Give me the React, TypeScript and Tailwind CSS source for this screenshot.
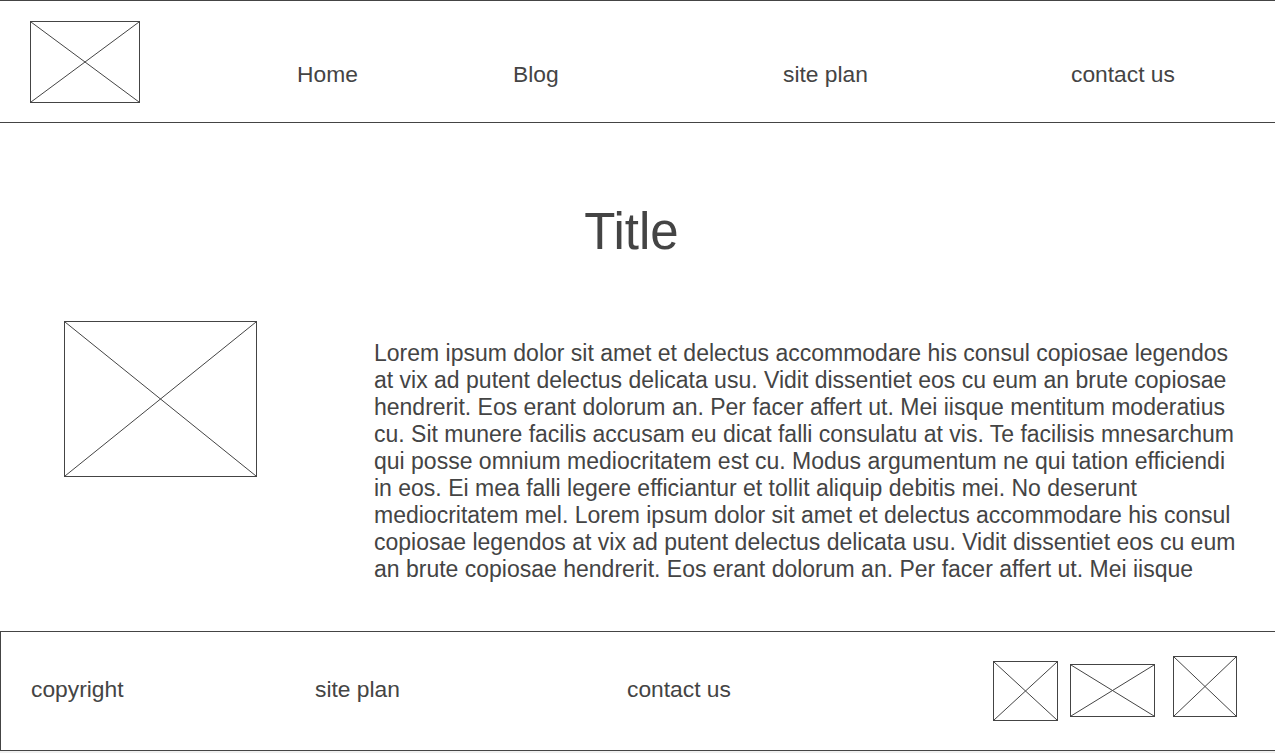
import React from "react";

function Placeholder({ className }: { className: string }) {
  return (
    <div className={`border border-[#444] box-border ${className}`}>
      <svg width="100%" height="100%" viewBox="0 0 100 100" preserveAspectRatio="none" className="block">
        <line x1="0" y1="0" x2="100" y2="100" stroke="#444" strokeWidth="1" vectorEffect="non-scaling-stroke" />
        <line x1="100" y1="0" x2="0" y2="100" stroke="#444" strokeWidth="1" vectorEffect="non-scaling-stroke" />
      </svg>
    </div>
  );
}

const body =
  "Lorem ipsum dolor sit amet et delectus accommodare his consul copiosae legendos at vix ad putent delectus delicata usu. Vidit dissentiet eos cu eum an brute copiosae hendrerit. Eos erant dolorum an. Per facer affert ut. Mei iisque mentitum moderatius cu. Sit munere facilis accusam eu dicat falli consulatu at vis. Te facilisis mnesarchum qui posse omnium mediocritatem est cu. Modus argumentum ne qui tation efficiendi in eos. Ei mea falli legere efficiantur et tollit aliquip debitis mei. No deserunt mediocritatem mel. Lorem ipsum dolor sit amet et delectus accommodare his consul copiosae legendos at vix ad putent delectus delicata usu. Vidit dissentiet eos cu eum an brute copiosae hendrerit. Eos erant dolorum an. Per facer affert ut. Mei iisque";

export default function App() {
  return (
    <div
      className="w-full h-[753px] bg-[#f0f0f0] text-[#444] overflow-hidden flex flex-col"
      style={{ fontFamily: '"Liberation Sans", Arial, sans-serif' }}
    >
      <div className="bg-white h-[751px] flex flex-col">
        {/* Header */}
        <header className="h-[123px] shrink-0 border-t border-b border-[#444] flex items-start">
          <Placeholder className="ml-[30px] mt-[20px] w-[110px] h-[82px] shrink-0" />
          <nav className="flex items-start mt-[60px] ml-[157px] text-[22.8px] leading-[26px]">
            <div className="w-[216px]">Home</div>
            <div className="w-[270px]">Blog</div>
            <div className="w-[288px]">site plan</div>
            <div>contact us</div>
          </nav>
        </header>

        {/* Main */}
        <main className="h-[508px] shrink-0 flex flex-col">
          <h1 className="mt-[83px] text-center pr-[12px] text-[51px] leading-none font-normal">Title</h1>
          <div className="mt-[64px] flex items-start">
            <Placeholder className="ml-[64px] w-[193px] h-[156px] shrink-0" />
            <p className="ml-[117px] mt-[19px] w-[868px] text-[23px] leading-[27px]">{body}</p>
          </div>
        </main>

        {/* Footer */}
        <footer className="h-[120px] shrink-0 border-t border-b border-l border-[#444] flex items-center text-[22.8px] leading-[26px]">
          <div className="ml-[30px] w-[284px] mb-[4px]">copyright</div>
          <div className="w-[312px] mb-[4px]">site plan</div>
          <div className="w-[366px] mb-[4px]">contact us</div>
          <div className="flex items-start self-start">
            <Placeholder className="mt-[29px] w-[65px] h-[60px]" />
            <Placeholder className="ml-[12px] mt-[32px] w-[85px] h-[53px]" />
            <Placeholder className="ml-[18px] mt-[24px] w-[64px] h-[61px]" />
          </div>
        </footer>
      </div>
    </div>
  );
}
